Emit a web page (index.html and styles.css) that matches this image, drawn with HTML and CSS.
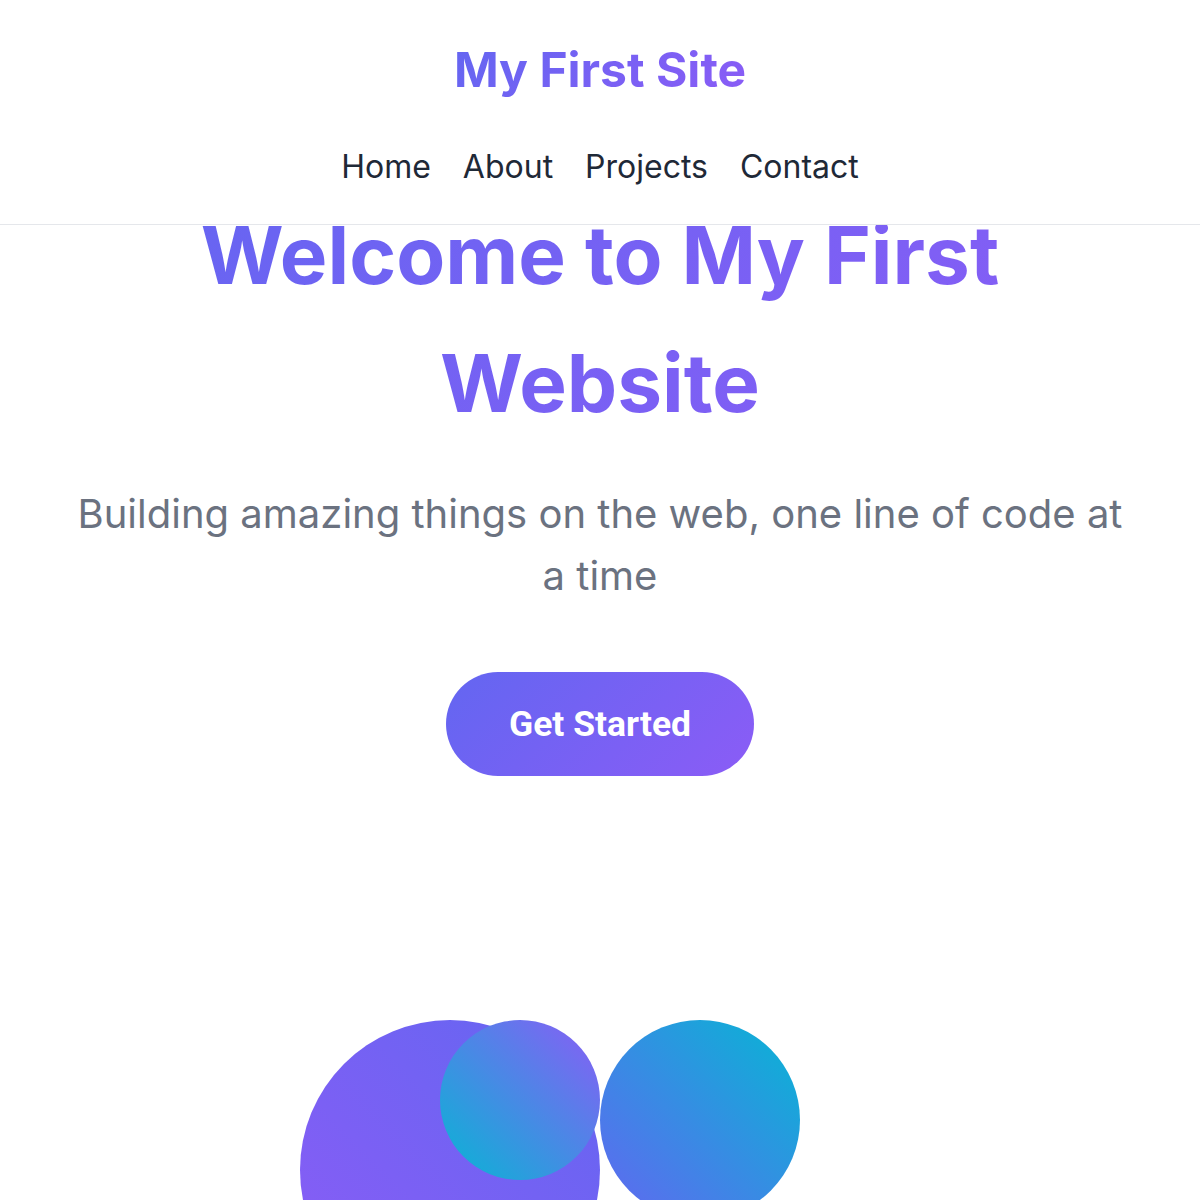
FILE: index.html
```html
<!DOCTYPE html>
<html lang="en">
<head>
<meta charset="utf-8">
<title>My First Site</title>
<link rel="stylesheet" href="styles.css">
</head>
<body>
<header class="site-header">
  <div class="logo">My First Site</div>
  <nav class="nav">
    <a href="#">Home</a>
    <a href="#">About</a>
    <a href="#">Projects</a>
    <a href="#">Contact</a>
  </nav>
</header>
<main class="hero">
  <h1 class="hero-title">Welcome to My First Website</h1>
  <p class="hero-sub">Building amazing things on the web, one line of code at a time</p>
  <button class="cta">Get Started</button>
  <div class="shapes">
    <div class="shape shape-big">
      <div class="shape shape-small"></div>
    </div>
    <div class="shape shape-right"></div>
  </div>
</main>
</body>
</html>
```

FILE: styles.css
```css
* { box-sizing: border-box; }

html, body {
  margin: 0;
  padding: 0;
  background: #ffffff;
  overflow: hidden;
}

body {
  font-family: Inter, "Noto Sans", sans-serif;
  line-height: 1.6;
  color: #1f2937;
}

.site-header {
  position: fixed;
  top: 0;
  left: 0;
  right: 0;
  z-index: 10;
  background: #ffffff;
  border-bottom: 1px solid #e5e7eb;
  padding: 32px 0;
  display: flex;
  flex-direction: column;
  align-items: center;
  gap: 32px;
}

.logo {
  font-size: 48px;
  font-weight: 700;
  line-height: 1.6;
  background: linear-gradient(135deg, #6366f1, #8b5cf6);
  -webkit-background-clip: text;
  background-clip: text;
  color: transparent;
}

.nav {
  display: flex;
  gap: 32px;
}

.nav a {
  font-size: 32px;
  line-height: 1.6;
  color: #1f2937;
  text-decoration: none;
}

.hero {
  padding: 191px 64px 0;
  display: flex;
  flex-direction: column;
  align-items: center;
  text-align: center;
}

.hero-title {
  margin: 0;
  font-size: 80px;
  font-weight: 700;
  line-height: 1.6;
  align-self: stretch;
  background: linear-gradient(135deg, #6366f1, #8b5cf6);
  -webkit-background-clip: text;
  background-clip: text;
  color: transparent;
}

.hero-sub {
  margin: 36px 0 0;
  font-size: 40px;
  line-height: 62px;
  color: #6b7280;
}

.cta {
  margin-top: 65px;
  border: none;
  border-radius: 52px;
  padding: 24px 63px;
  font-family: Roboto, "Liberation Sans", sans-serif;
  font-size: 35.5px;
  font-weight: 700;
  line-height: 56px;
  color: #ffffff;
  background: linear-gradient(135deg, #6366f1, #8b5cf6);
  cursor: pointer;
}

.shapes {
  margin-top: 244px;
  width: 600px;
  display: flex;
  align-items: flex-start;
}

.shape {
  border-radius: 50%;
  flex: none;
}

.shape-big {
  position: relative;
  width: 300px;
  height: 300px;
  background: linear-gradient(45deg, #8b5cf6, #6366f1);
}

.shape-small {
  position: absolute;
  top: 0;
  left: 140px;
  width: 160px;
  height: 160px;
  background: linear-gradient(45deg, #06b6d4, #8b5cf6);
}

.shape-right {
  width: 200px;
  height: 200px;
  background: linear-gradient(225deg, #06b6d4, #6366f1);
}
```
